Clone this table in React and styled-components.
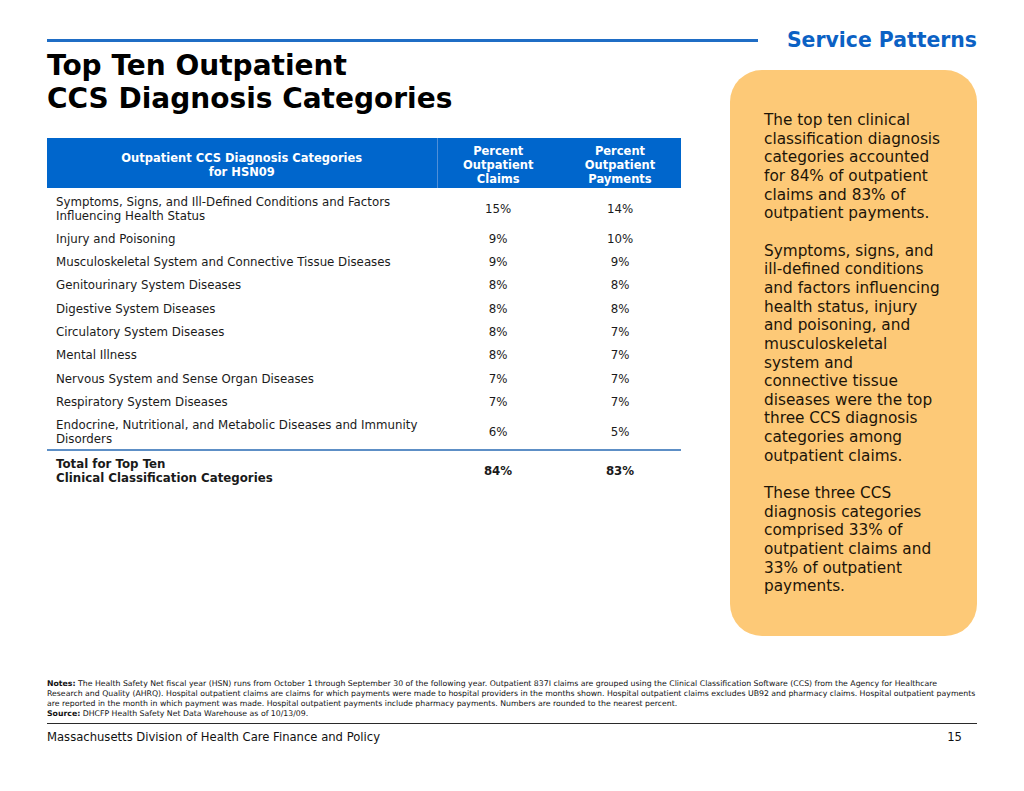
import React from 'react'
import styled, { createGlobalStyle } from 'styled-components'

const GlobalStyle = createGlobalStyle`
  html, body {
    margin: 0;
    padding: 0;
    background: #ffffff;
  }
  body {
    font-family: "DejaVu Sans", Verdana, sans-serif;
    color: #111;
  }
`;

const Page = styled.div`
  width: 1024px;
  height: 791px;
  box-sizing: border-box;
  padding: 31px 47px 0;
  display: flex;
  flex-direction: column;
`;

const TopBar = styled.div`
  height: 18px;
  display: flex;
  align-items: center;
`;

const Rule = styled.div`
  flex: 1;
  height: 3px;
  background: #1f6dc5;
  margin-right: 29px;
`;

const Section = styled.div`
  font-size: 20.4px;
  font-weight: bold;
  color: #0b61c4;
  white-space: nowrap;
`;

const Body = styled.div`
  display: flex;
  justify-content: space-between;
`;

const Left = styled.div`
  width: 634px;
`;

const Title = styled.h1`
  margin: 0;
  font-size: 28px;
  line-height: 33px;
  font-weight: bold;
  color: #000;
`;

const Table = styled.table`
  margin-top: 23px;
  width: 634px;
  border-collapse: collapse;
  table-layout: fixed;
  font-size: 11.8px;
  line-height: 14px;
  color: #1a1a1a;
`;

const HeadCell = styled.th`
  background: #0066cc;
  color: #fff;
  font-size: 11.5px;
  font-weight: bold;
  text-align: center;
  padding: 5.5px 0 2.5px;
  height: 42px;
  border-left: ${p => (p.$divider ? '1px solid #4f8fd8' : 'none')};
`;

const Row = styled.tr`
  border-bottom: ${p => (p.$rule ? '2px solid #5d8fc6' : 'none')};
`;

const Cell = styled.td`
  padding: 6.6px 0 2.7px 9px;
  text-align: left;
  font-weight: ${p => (p.$bold ? 'bold' : 'normal')};
  vertical-align: middle;
`;

const Value = styled.td`
  padding: 6.6px 0 2.7px;
  text-align: center;
  font-weight: ${p => (p.$bold ? 'bold' : 'normal')};
  vertical-align: middle;
`;

const Callout = styled.div`
  width: 247px;
  height: 566px;
  box-sizing: border-box;
  margin-top: 21px;
  border-radius: 32px;
  background: #fdc977;
  padding: 41px 0 0 34px;
  font-size: 15.3px;
  line-height: 18.65px;
  color: #1c1408;
`;

const Para = styled.p`
  margin: 0 0 18.65px;
  white-space: nowrap;
`;

const Notes = styled.div`
  margin-top: 43px;
  font-size: 7.78px;
  line-height: 10px;
  color: #111;
  white-space: nowrap;
`;

const Hr = styled.div`
  margin-top: 4px;
  height: 1px;
  background: #2a2a2a;
`;

const Footer = styled.div`
  margin-top: 5px;
  display: flex;
  justify-content: space-between;
  font-size: 11.6px;
  line-height: 16px;
  color: #111;
  padding-right: 15px;
`;

const rows = [
  ['Symptoms, Signs, and Ill-Defined Conditions and Factors', 'Influencing Health Status', '15%', '14%'],
  ['Injury and Poisoning', null, '9%', '10%'],
  ['Musculoskeletal System and Connective Tissue Diseases', null, '9%', '9%'],
  ['Genitourinary System Diseases', null, '8%', '8%'],
  ['Digestive System Diseases', null, '8%', '8%'],
  ['Circulatory System Diseases', null, '8%', '7%'],
  ['Mental Illness', null, '8%', '7%'],
  ['Nervous System and Sense Organ Diseases', null, '7%', '7%'],
  ['Respiratory System Diseases', null, '7%', '7%'],
  ['Endocrine, Nutritional, and Metabolic Diseases and Immunity', 'Disorders', '6%', '5%'],
];

const callout = [
  ['The top ten clinical', 'classification diagnosis', 'categories accounted', 'for 84% of outpatient', 'claims and 83% of', 'outpatient payments.'],
  ['Symptoms, signs, and', 'ill-defined conditions', 'and factors influencing', 'health status, injury', 'and poisoning, and', 'musculoskeletal', 'system and', 'connective tissue', 'diseases were the top', 'three CCS diagnosis', 'categories among', 'outpatient claims.'],
  ['These three CCS', 'diagnosis categories', 'comprised 33% of', 'outpatient claims and', '33% of outpatient', 'payments.'],
];

const Lines = ({ lines }) =>
  lines.map((l, i) => (
    <React.Fragment key={i}>
      {i > 0 && <br />}
      {l}
    </React.Fragment>
  ));

export default function App() {
  return (
    <>
      <GlobalStyle />
      <Page>
        <TopBar>
          <Rule />
          <Section>Service Patterns</Section>
        </TopBar>

        <Body>
          <Left>
            <Title>
              Top Ten Outpatient
              <br />
              CCS Diagnosis Categories
            </Title>

            <Table>
              <colgroup>
                <col style={{ width: 390 }} />
                <col style={{ width: 122 }} />
                <col style={{ width: 122 }} />
              </colgroup>
              <thead>
                <tr>
                  <HeadCell>
                    Outpatient CCS Diagnosis Categories
                    <br />
                    for HSN09
                  </HeadCell>
                  <HeadCell $divider>
                    Percent
                    <br />
                    Outpatient
                    <br />
                    Claims
                  </HeadCell>
                  <HeadCell>
                    Percent
                    <br />
                    Outpatient
                    <br />
                    Payments
                  </HeadCell>
                </tr>
              </thead>
              <tbody>
                {rows.map(([a, b, c, d], i) => (
                  <Row key={a} $rule={i === rows.length - 1}>
                    <Cell>
                      {a}
                      {b && (
                        <>
                          <br />
                          {b}
                        </>
                      )}
                    </Cell>
                    <Value>{c}</Value>
                    <Value>{d}</Value>
                  </Row>
                ))}
                <Row>
                  <Cell $bold>
                    Total for Top Ten
                    <br />
                    Clinical Classification Categories
                  </Cell>
                  <Value $bold>84%</Value>
                  <Value $bold>83%</Value>
                </Row>
              </tbody>
            </Table>
          </Left>

          <Callout>
            {callout.map((p, i) => (
              <Para key={i}>
                <Lines lines={p} />
              </Para>
            ))}
          </Callout>
        </Body>

        <Notes>
          <b>Notes:</b> The Health Safety Net fiscal year (HSN) runs from October 1 through September 30 of the following year. Outpatient 837I claims are grouped using the Clinical Classification Software (CCS) from the Agency for Healthcare
          <br />
          Research and Quality (AHRQ). Hospital outpatient claims are claims for which payments were made to hospital providers in the months shown. Hospital outpatient claims excludes UB92 and pharmacy claims. Hospital outpatient payments
          <br />
          are reported in the month in which payment was made. Hospital outpatient payments include pharmacy payments. Numbers are rounded to the nearest percent.
          <br />
          <b>Source:</b> DHCFP Health Safety Net Data Warehouse as of 10/13/09.
        </Notes>
        <Hr />
        <Footer>
          <span>Massachusetts Division of Health Care Finance and Policy</span>
          <span>15</span>
        </Footer>
      </Page>
    </>
  )
}
